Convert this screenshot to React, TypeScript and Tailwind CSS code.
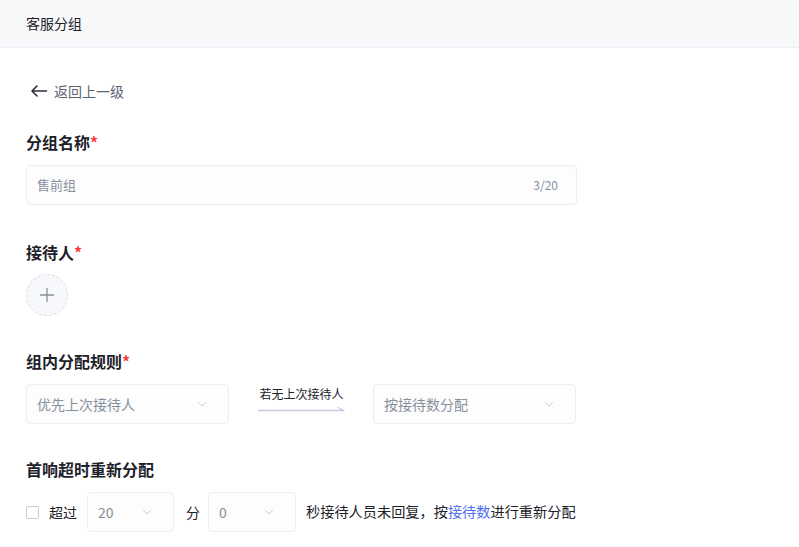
import React from "react";

const Star = () => <span className="text-[#f53f3f]">*</span>;

const Chevron = () => (
  <svg width="12" height="12" viewBox="0 0 12 12" fill="none" className="text-[#c9cdd4]">
    <path d="M2.5 4.5L6 8L9.5 4.5" stroke="currentColor" strokeWidth="1" strokeLinecap="round" strokeLinejoin="round" />
  </svg>
);

function Select({ value, className }: { value: string; className: string }) {
  return (
    <div className={`flex h-[40px] items-center justify-between rounded-[4px] border border-[#eceef2] bg-[#fdfdfe] pl-[10px] text-[14px] text-[#86909c] ${className}`}>
      <span>{value}</span>
      <Chevron />
    </div>
  );
}

export default function App() {
  return (
    <div className="min-h-[547px] w-[799px] bg-white font-['Noto_Sans_CJK_SC','Noto_Sans',sans-serif] text-[#1d2129]">
      <div className="flex h-[48px] items-center border-b border-[#eef0f3] bg-[#f7f8fa] px-[26px] text-[14px] text-[#1d2129]">
        客服分组
      </div>
      <div className="px-[26px]">
        <div className="mt-[31px] flex h-[24px] items-center gap-[6px] pl-[4px] text-[14px] text-[#5c6373]">
          <svg width="18" height="14" viewBox="0 0 18 14" fill="none">
            <path d="M16.5 7H2M7 2L2 7l5 5" stroke="#2b2f38" strokeWidth="1.6" strokeLinecap="round" strokeLinejoin="round" />
          </svg>
          <span>返回上一级</span>
        </div>

        <div className="mt-[28px] h-[22px] text-[16px] font-semibold leading-[22px]">
          分组名称<Star />
        </div>
        <div className="mt-[12px] flex h-[40px] w-[551px] items-center justify-between rounded-[4px] border border-[#eceef2] bg-[#fdfdfe] pl-[10px] pr-[18px]">
          <span className="text-[13px] text-[#86909c]">售前组</span>
          <span className="text-[12px] text-[#86909c]">3/20</span>
        </div>

        <div className="mt-[36px] h-[22px] text-[16px] font-semibold leading-[22px]">
          接待人<Star />
        </div>
        <div className="mt-[11px] flex h-[42px] w-[42px] items-center justify-center rounded-full border border-dashed border-[#d9dce2] bg-[#f7f8fb]">
          <svg width="16" height="16" viewBox="0 0 16 16" fill="none">
            <path d="M8 1.5v13M1.5 8h13" stroke="#8a8f99" strokeWidth="1.3" strokeLinecap="round" />
          </svg>
        </div>

        <div className="mt-[34px] h-[22px] text-[16px] font-semibold leading-[22px]">
          组内分配规则<Star />
        </div>
        <div className="mt-[12px] flex items-center">
          <Select value="优先上次接待人" className="w-[203px] pr-[20px]" />
          <div className="ml-[29px] flex w-[87px] flex-col items-center self-start pt-[1px]">
            <span className="text-[12px] leading-[18px] text-[#1d2129]">若无上次接待人</span>
            <svg width="87" height="6" viewBox="0 0 87 6" fill="none" className="mt-[3px]">
              <path d="M0 4.5H86L80 1.5" stroke="#c6c8e0" strokeWidth="1.3" strokeLinecap="round" strokeLinejoin="round" />
            </svg>
          </div>
          <Select value="按接待数分配" className="ml-[28px] w-[203px] pr-[20px]" />
        </div>

        <div className="mt-[34px] h-[22px] text-[16px] font-semibold leading-[22px]">
          首响超时重新分配
        </div>
        <div className="mt-[12px] flex items-center text-[14px]">
          <div className="h-[13px] w-[13px] rounded-[2px] border border-[#c9cdd4] bg-white" />
          <span className="ml-[10px] w-[28px]">超过</span>
          <Select value="20" className="ml-[10px] w-[87px] pr-[20px]" />
          <span className="ml-[12px] w-[14px]">分</span>
          <Select value="0" className="ml-[8px] w-[88px] pr-[20px]" />
          <span className="ml-[10px] text-[14.2px]">
            秒接待人员未回复，按<span className="text-[#4e6ef2]">接待数</span>进行重新分配
          </span>
        </div>
      </div>
    </div>
  );
}
